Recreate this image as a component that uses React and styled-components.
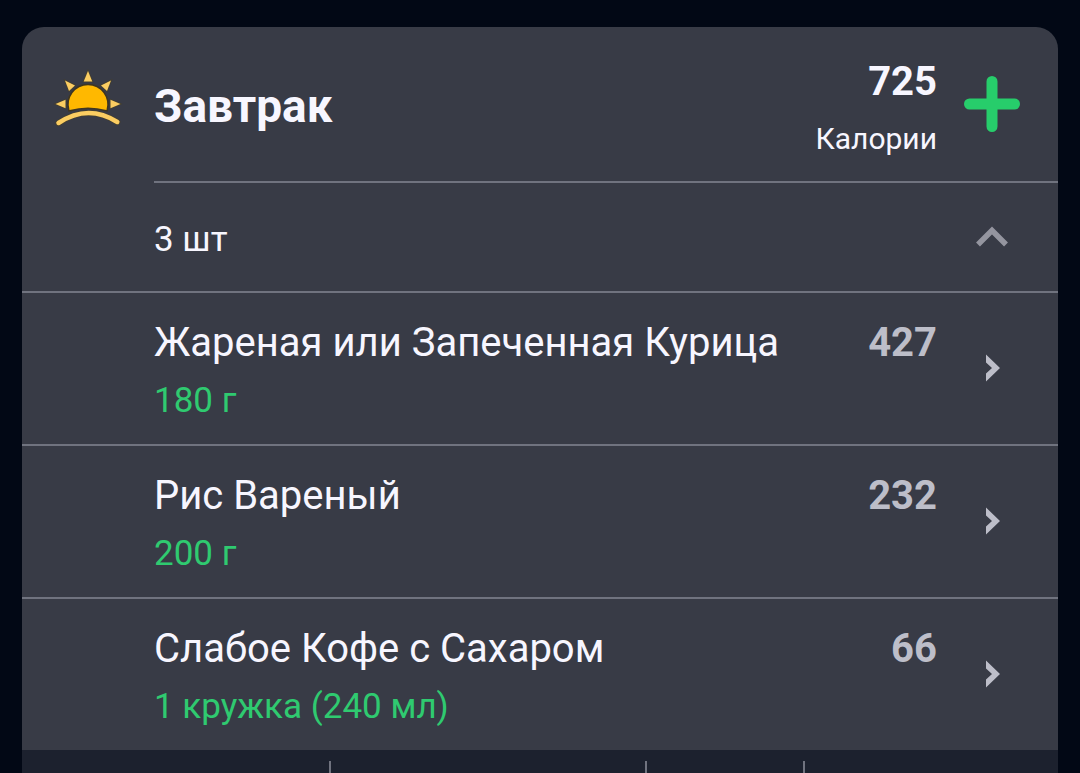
import React, { useState } from "react";
import styled, { createGlobalStyle } from "styled-components";

const GlobalStyle = createGlobalStyle`
  * {
    box-sizing: border-box;
  }

  body {
    margin: 0;
    background: #020815;
    color: #f7f6ff;
    font-family: Roboto, "Liberation Sans", sans-serif;
  }
`;

const Page = styled.main`
  display: flex;
  flex-direction: column;
  min-height: 100vh;
  padding: 27px 22px 0;
`;

const Card = styled.section`
  background: #383b46;
  border-radius: 22px 22px 0 0;
`;

const Row = styled.div`
  display: flex;
  align-items: center;
  padding-right: 11px;
`;

const Header = styled(Row)`
  min-height: 154px;
`;

const IconCell = styled.div`
  display: flex;
  justify-content: center;
  flex: none;
  width: 132px;
  padding-bottom: 10px;
`;

const Title = styled.h2`
  flex: 1;
  margin: 0;
  padding-top: 4px;
  font-size: 46px;
  font-weight: 700;
  line-height: 58px;
`;

const Total = styled.div`
  padding-top: 11px;
  text-align: right;
`;

const Calories = styled.div`
  color: ${(props) => (props.$muted ? "#bdbec9" : "#f7f6ff")};
  font-size: 40px;
  font-weight: 700;
  line-height: 58px;
`;

const Caption = styled.div`
  font-size: 30px;
  line-height: 56px;
`;

const IconButton = styled.button`
  display: flex;
  align-items: center;
  justify-content: center;
  align-self: stretch;
  flex: none;
  width: 110px;
  padding: 0;
  border: none;
  background: none;
  cursor: pointer;
`;

const Divider = styled.hr`
  height: 2px;
  margin: 0 0 0 132px;
  border: none;
  background: #70737f;
`;

const CountRow = styled(Row)`
  min-height: 108px;
  padding-left: 132px;
`;

const Count = styled.span`
  flex: 1;
  padding-top: 4px;
  font-size: 35px;
`;

const List = styled.ul`
  margin: 0;
  padding: 0;
  list-style: none;
`;

const Item = styled.li`
  display: flex;
  padding: 0 11px 0 132px;
  border-top: 2px solid #70737f;
`;

const ItemText = styled.div`
  flex: 1;
  padding: 21px 0 14px;
`;

const ItemName = styled.div`
  font-size: 40px;
  line-height: 58px;
`;

const ItemAmount = styled.div`
  color: #2fca70;
  font-size: 35px;
  line-height: 58px;
`;

const ItemCalories = styled.div`
  padding-top: 21px;
`;

const Footer = styled.footer`
  display: grid;
  flex: 1;
  grid-template-columns: 309fr 316fr 158fr 253fr;
  min-height: 23px;
  padding-top: 11px;
  background: #1c212e;
`;

const FooterCell = styled.div`
  border-right: 2px solid #70737f;

  &:last-child {
    border-right: none;
  }
`;

const SunriseIcon = () => (
  <svg width="70" height="60" viewBox="53 69 70 60" aria-hidden="true">
    <g stroke="#453f2e" strokeWidth="1.5" fill="#fbcd62" paintOrder="stroke">
      <path d="M88 71 L92.3 81.5 H83.7 Z" />
      <path d="M65 80.5 L75 85.5 L69 91 Z" />
      <path d="M111 80.5 L101 85.5 L107 91 Z" />
      <path d="M55.5 104 L65.5 99.8 V108.2 Z" />
      <path d="M120.5 104 L110.5 99.8 V108.2 Z" />
    </g>
    <path
      d="M69.5 110 A19.3 19.3 0 1 1 106.5 110 Q88 105 69.5 110 Z"
      fill="#ffb800"
      stroke="#40361f"
      strokeWidth="3"
      paintOrder="stroke"
    />
    <g fill="none" strokeLinecap="round">
      <path
        d="M58.5 123 Q88 103.5 117.3 122"
        stroke="#453f2e"
        strokeWidth="6"
      />
      <path
        d="M58.5 123 Q88 103.5 117.3 122"
        stroke="#fbcd62"
        strokeWidth="4.5"
      />
    </g>
  </svg>
);

const PlusIcon = () => (
  <svg width="56" height="56" viewBox="0 0 56 56" aria-hidden="true">
    <path
      d="M28 5.5 V50.5 M5.5 28 H50.5"
      stroke="#27cd6b"
      strokeWidth="11"
      strokeLinecap="round"
    />
  </svg>
);

const ToggleIcon = styled.svg`
  transform: ${(props) => (props.$open ? "none" : "rotate(180deg)")};
`;

const ChevronRight = () => (
  <svg width="16" height="30" viewBox="-2 0 16 30" aria-hidden="true">
    <path d="M0 0.5 L14 14 L0 27.5 V19.5 L6 14 L0 8.5 Z" fill="#bdbec9" />
  </svg>
);

const foods = [
  { name: "Жареная или Запеченная Курица", amount: "180 г", calories: 427 },
  { name: "Рис Вареный", amount: "200 г", calories: 232 },
  { name: "Слабое Кофе с Сахаром", amount: "1 кружка (240 мл)", calories: 66 },
];

const App = () => {
  const [open, setOpen] = useState(true);
  const total = foods.reduce((sum, food) => sum + food.calories, 0);

  return (
    <Page>
      <GlobalStyle />
      <Card>
        <Header>
          <IconCell>
            <SunriseIcon />
          </IconCell>
          <Title>Завтрак</Title>
          <Total>
            <Calories>{total}</Calories>
            <Caption>Калории</Caption>
          </Total>
          <IconButton type="button" aria-label="Добавить">
            <PlusIcon />
          </IconButton>
        </Header>
        <Divider />
        <CountRow>
          <Count>{foods.length} шт</Count>
          <IconButton
            type="button"
            aria-label="Свернуть"
            aria-expanded={open}
            onClick={() => setOpen(!open)}
          >
            <ToggleIcon
              $open={open}
              width="34"
              height="22"
              viewBox="0 0 34 22"
              aria-hidden="true"
            >
              <path
                d="M3 18.5 L17 4.5 L31 18.5"
                fill="none"
                stroke="#94959f"
                strokeWidth="5.5"
              />
            </ToggleIcon>
          </IconButton>
        </CountRow>
        {open && (
          <List>
            {foods.map((food) => (
              <Item key={food.name}>
                <ItemText>
                  <ItemName>{food.name}</ItemName>
                  <ItemAmount>{food.amount}</ItemAmount>
                </ItemText>
                <ItemCalories>
                  <Calories $muted>{food.calories}</Calories>
                </ItemCalories>
                <IconButton type="button" aria-label={food.name}>
                  <ChevronRight />
                </IconButton>
              </Item>
            ))}
          </List>
        )}
      </Card>
      <Footer>
        <FooterCell />
        <FooterCell />
        <FooterCell />
        <FooterCell />
      </Footer>
    </Page>
  );
};

export default App;
